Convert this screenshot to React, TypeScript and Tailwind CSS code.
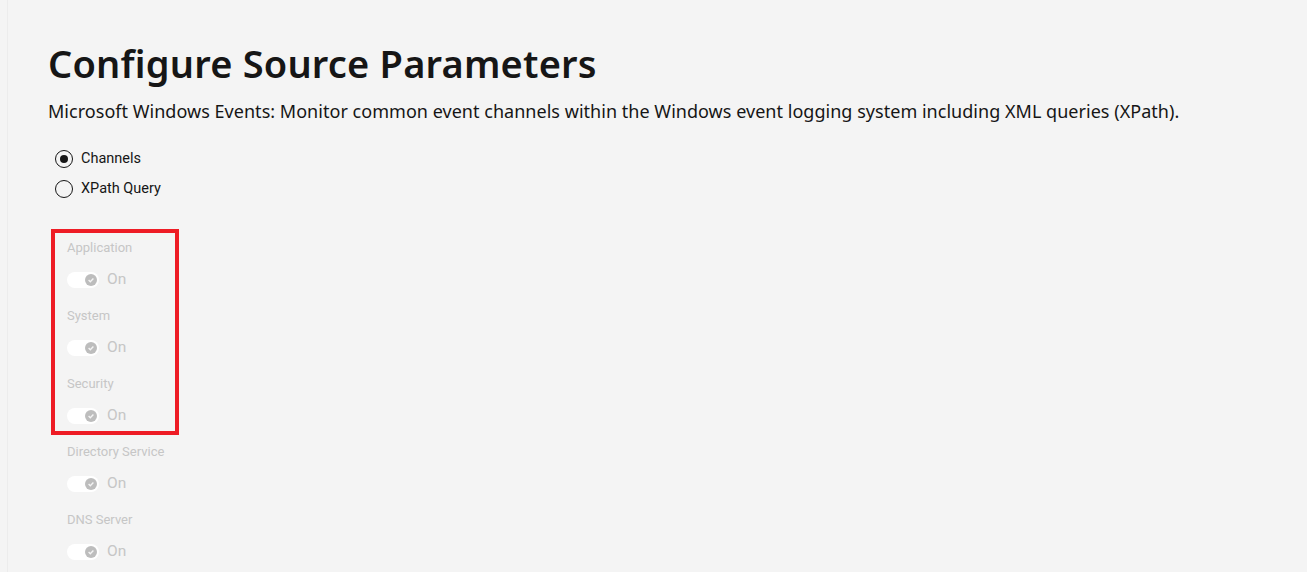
import React from "react";

const channels = ["Application", "System", "Security", "Directory Service", "DNS Server"];

function Toggle() {
  return (
    <div className="flex items-center h-[20px]">
      <div className="relative w-[32px] h-[16px] rounded-full bg-white">
        <div className="absolute right-[2px] top-[2px] w-[12px] h-[12px] rounded-full bg-[#bdbdbd] flex items-center justify-center">
          <svg width="8" height="8" viewBox="0 0 8 8">
            <path d="M1.6 4.1 L3.3 5.7 L6.4 2.5" fill="none" stroke="#f4f4f4" strokeWidth="1.4" />
          </svg>
        </div>
      </div>
      <span className="ml-[8px] text-[15.5px] text-[#c6c6c6] leading-none">On</span>
    </div>
  );
}

function ChannelRow({ name }: { name: string }) {
  return (
    <div className="h-[68px] pt-[9px]">
      <div className="text-[13px] leading-[16px] text-[#c6c6c6]">{name}</div>
      <div className="mt-[14px]">
        <Toggle />
      </div>
    </div>
  );
}

export default function App() {
  return (
    <div
      className="min-h-[572px] w-full bg-[#f4f4f4] overflow-hidden"
      style={{ fontFamily: "'Noto Sans', 'Liberation Sans', sans-serif" }}
    >
      <div className="border-l border-[#ececec] ml-[7px] min-h-[572px] pl-[40px] pt-[40px]">
        <h1 className="text-[38px] leading-[46px] font-semibold text-[#161616] tracking-[0.2px]">
          Configure Source Parameters
        </h1>
        <p className="mt-[13px] text-[18px] leading-[24px] text-[#161616] tracking-[0.03px]">
          Microsoft Windows Events: Monitor common event channels within the Windows event logging system including XML queries (XPath).
        </p>
        <div className="mt-[27px] flex flex-col gap-[12px]" style={{ fontFamily: "Roboto, 'Liberation Sans', sans-serif" }}>
          <label className="flex items-center h-[18px]">
            <span className="ml-[7px] w-[18px] h-[18px] rounded-full border border-[#161616] flex items-center justify-center">
              <span className="w-[8px] h-[8px] rounded-full bg-[#161616]" />
            </span>
            <span className="ml-[8px] text-[14.5px] text-[#161616]">Channels</span>
          </label>
          <label className="flex items-center h-[18px]">
            <span className="ml-[7px] w-[18px] h-[18px] rounded-full border border-[#161616]" />
            <span className="ml-[8px] text-[14.5px] text-[#161616]">XPath Query</span>
          </label>
        </div>
        <div className="mt-[31px] relative" style={{ fontFamily: "Roboto, 'Liberation Sans', sans-serif" }}>
          <div className="absolute left-[3px] top-[0px] w-[128px] h-[206px] border-[4px] border-[#ee1c25] pointer-events-none" />
          <div className="pl-[19px] pt-[2px]">
            {channels.map((c) => (
              <ChannelRow key={c} name={c} />
            ))}
          </div>
        </div>
      </div>
    </div>
  );
}
